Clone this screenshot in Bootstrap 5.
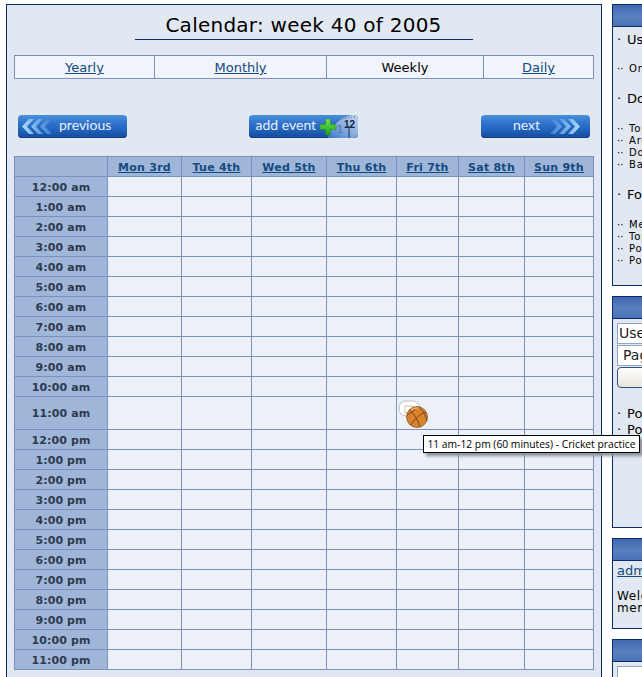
<!DOCTYPE html>
<html lang="en">
<head>
<meta charset="utf-8">
<title>Calendar</title>
<link rel="stylesheet" href="https://cdn.jsdelivr.net/npm/bootstrap@5.3.0/dist/css/bootstrap.min.css">
<style>
html,body{overflow:hidden;height:677px;background:#fff}
body{font-family:"DejaVu Sans",sans-serif;color:#000;font-size:12px;position:relative}
.shell{width:900px;padding:4px 0 0 6px;gap:10px}
.mainbox{width:596px;height:720px;flex:none;background:#e2e8f1;border:1px solid #0b2d70;padding:0 8px 0 7px}
.caltitle{width:338px;height:35px;margin:0 auto 15px;border-bottom:1px solid #0b2d70;font-size:20px;line-height:41px;text-align:center;letter-spacing:.25px;white-space:nowrap}
.gridtab{table-layout:fixed;border-collapse:collapse;width:579px}
.gridtab td,.gridtab th{border:1px solid #7b91b9;padding:0;text-align:center}
.viewtab{height:24px;margin-bottom:36px}
.viewtab td{background:#f1f4fa;font-size:13px;line-height:20px;height:23px;padding-top:2px}
.viewtab td:nth-child(1){width:140px}.viewtab td:nth-child(2){width:172px}.viewtab td:nth-child(3){width:157px}.viewtab td:nth-child(4){width:110px}
a.cal-link{color:#134a80}
.btnrow{padding:0 3px 0 4px;margin-bottom:18px;height:23px}
.imgbtn{width:109px;height:23px;padding:0;border:0;border-radius:4px;background:linear-gradient(#4a90dc 0,#3577cf 30%,#2163bd 65%,#16479a 100%);color:#e8f0fa;font-family:"Lato",sans-serif;font-size:14px;line-height:22px;display:flex;align-items:center;overflow:hidden;white-space:nowrap;box-shadow:inset 0 -1px 0 #123f8a}
.imgbtn:hover{color:#e8f0fa;background:linear-gradient(#4a90dc 0,#3577cf 30%,#2163bd 65%,#16479a 100%)}
.imgbtn span{margin-top:-3px}
.btn-prev svg{margin:0 7px 0 4px;flex:none}
.btn-next{justify-content:flex-end}
.btn-next svg{margin:0 10px 0 10px;flex:none}
.btn-add{margin-right:2px}
.btn-add span{margin-left:7px}
.btn-add svg{margin-left:auto;flex:none}
.weektab th,.weektab td{height:20px;font-size:11px;line-height:13px}
.weektab th{padding-top:2px}
.weektab thead th{background:#a0b6d9;font-weight:700;letter-spacing:.25px}
.weektab tbody th{background:#a0b6d9;color:#2d3a4e;font-weight:700;letter-spacing:.1px}
.weektab td{background:#ecf0f8}
.weektab .w1{width:93px}.weektab .w2{width:74px}.weektab .w3{width:70px}.weektab .w4{width:75px}.weektab .w5{width:70px}.weektab .w6{width:62px}.weektab .w7{width:66px}.weektab .w8{width:69px}
.weektab tr.tall th,.weektab tr.tall td{height:33px}
.weektab tr.tall th{padding-top:0}
.weektab td.evcell{text-align:left;vertical-align:top;padding:3px 0 0 1px}
.evcell svg{display:block}
.sidecol{width:280px;flex:none}
.sidebox{background:#e2e8f1;border:1px solid #0b2d70;border-right:0;margin-bottom:10px}
.sidehead{height:22px;background:linear-gradient(#3f68ae,#5a80bf 55%,#4a72b5);border-bottom:1px solid #0b2d70}
.box-one{height:282px}.box-two{height:232px}.box-three{height:91px}.box-four{height:120px}
.lv1{font-size:13px;line-height:16px;padding-left:4px;white-space:nowrap}
.lv1 b,.lv2 b{font-weight:400;display:inline-block}
.lv1 b{width:10px}
.lv2{font-size:10px;line-height:12px;padding-left:4px;letter-spacing:.8px;white-space:nowrap}
.lv2 b{width:12px;letter-spacing:0}
.sp-a{margin-top:5px}.sp-b{margin-top:15px}.sp-c{margin-top:16px}.sp-d{margin-top:18px}
.fld{height:21px;width:240px;border:1px solid #8fa5c4;background:#fff;font-size:14px;line-height:19px;padding:0 0 0 1px;margin:4px 0 0 4px;color:#222;white-space:nowrap;border-radius:0;box-shadow:none}
.fld+.fld{margin-top:1px}
.fld-sel{padding-left:5px}
.gobtn{display:block;width:240px;height:21px;margin:1px 0 0 4px;background:linear-gradient(#fff,#e8e6da);border:1px solid #33527f;border-radius:4px}
.usr{padding:3px 4px;font-size:13px;line-height:14px}
.usr a{color:#134a80}
.usr p{margin:12px 0 0;font-size:12px;letter-spacing:.6px;line-height:12px;white-space:nowrap}
.tip{position:absolute;left:423px;top:435px;background:#fff;border:1px solid #000;box-shadow:3px 3px 3px #8a8f98;font-family:"Open Sans",sans-serif;font-size:10.3px;line-height:16px;padding:0 2px;white-space:nowrap;height:18px;width:217px;text-align:center;color:#000}
</style>
</head>
<body>
<div class="d-flex shell">
  <main class="mainbox">
    <div class="caltitle">Calendar: week 40 of 2005</div>
    <table class="gridtab viewtab"><tr>
      <td><a class="cal-link" href="#">Yearly</a></td>
      <td><a class="cal-link" href="#">Monthly</a></td>
      <td>Weekly</td>
      <td><a class="cal-link" href="#">Daily</a></td>
    </tr></table>
    <div class="d-flex justify-content-between btnrow">
      <a class="btn imgbtn btn-prev" href="#"><svg width="30" height="15" viewBox="0 0 30 15"><defs><linearGradient id="ga"><stop offset="0" stop-color="#a8dcfa"/><stop offset="1" stop-color="#3a7ed2"/></linearGradient></defs><path d="M7 0h5L5 7.500l7 7.500H7L0 7.500zM16 0h5l-7 7.500 7 7.500h-5L9 7.500zM25 0h5l-7 7.500 7 7.500h-5l-7-7.500z" fill="url(#ga)"/></svg><span>previous</span></a>
      <a class="btn imgbtn btn-add" href="#"><span>add event</span><svg width="40" height="23" viewBox="0 0 40 23"><defs><linearGradient id="gc" x1="0" x2="1" y1="1" y2="0"><stop offset="0" stop-color="#3c7acc"/><stop offset=".55" stop-color="#8fb0de"/><stop offset="1" stop-color="#c6d6ee"/></linearGradient><linearGradient id="gp" x1="0" x2="0" y1="0" y2="1"><stop offset="0" stop-color="#6fe04a"/><stop offset="1" stop-color="#1da31f"/></linearGradient></defs><path d="M10 23C12 12 20 3 34 0h2a4 4 0 0 1 4 4v15a4 4 0 0 1-4 4z" fill="url(#gc)"/><path d="M16 8Q25 2 38 2" fill="none" stroke="#2d4f88" stroke-width="1" stroke-dasharray="1 2"/><path d="M31 11v12" stroke="#16325f"/><path d="M7.500 4h5v5.500H18v5h-5.500V20h-5v-5.500H2v-5h5.500z" fill="url(#gp)" stroke="#1b8c1c" stroke-width=".5"/><text x="19" y="18" font-family="Liberation Sans" font-size="11" fill="#5274ae">1</text><text x="26" y="13" font-family="Liberation Sans" font-size="11" font-weight="700" textLength="11" lengthAdjust="spacingAndGlyphs" fill="#10233f">12</text></svg></a>
      <a class="btn imgbtn btn-next" href="#"><span>next</span><svg width="30" height="15" viewBox="0 0 30 15"><defs><linearGradient id="gb"><stop offset="0" stop-color="#3a7ed2"/><stop offset="1" stop-color="#a8dcfa"/></linearGradient></defs><path d="M0 0h5l7 7.500L5 15H0l7-7.500zM9 0h5l7 7.500-7 7.500H9l7-7.500zM18 0h5l7 7.500-7 7.500h-5l7-7.500z" fill="url(#gb)"/></svg></a>
    </div>
    <table class="gridtab weektab">
      <thead><tr>
        <th class="w1"></th>
        <th class="w2"><a class="cal-link" href="#">Mon 3rd</a></th>
        <th class="w3"><a class="cal-link" href="#">Tue 4th</a></th>
        <th class="w4"><a class="cal-link" href="#">Wed 5th</a></th>
        <th class="w5"><a class="cal-link" href="#">Thu 6th</a></th>
        <th class="w6"><a class="cal-link" href="#">Fri 7th</a></th>
        <th class="w7"><a class="cal-link" href="#">Sat 8th</a></th>
        <th class="w8"><a class="cal-link" href="#">Sun 9th</a></th>
      </tr></thead>
      <tbody>
        <tr><th>12:00 am</th><td></td><td></td><td></td><td></td><td></td><td></td><td></td></tr>
        <tr><th>1:00 am</th><td></td><td></td><td></td><td></td><td></td><td></td><td></td></tr>
        <tr><th>2:00 am</th><td></td><td></td><td></td><td></td><td></td><td></td><td></td></tr>
        <tr><th>3:00 am</th><td></td><td></td><td></td><td></td><td></td><td></td><td></td></tr>
        <tr><th>4:00 am</th><td></td><td></td><td></td><td></td><td></td><td></td><td></td></tr>
        <tr><th>5:00 am</th><td></td><td></td><td></td><td></td><td></td><td></td><td></td></tr>
        <tr><th>6:00 am</th><td></td><td></td><td></td><td></td><td></td><td></td><td></td></tr>
        <tr><th>7:00 am</th><td></td><td></td><td></td><td></td><td></td><td></td><td></td></tr>
        <tr><th>8:00 am</th><td></td><td></td><td></td><td></td><td></td><td></td><td></td></tr>
        <tr><th>9:00 am</th><td></td><td></td><td></td><td></td><td></td><td></td><td></td></tr>
        <tr><th>10:00 am</th><td></td><td></td><td></td><td></td><td></td><td></td><td></td></tr>
        <tr class="tall"><th>11:00 am</th><td></td><td></td><td></td><td></td><td class="evcell"><svg width="31" height="28" viewBox="0 0 31 28"><rect x="1" y="1" width="21" height="15" rx="7" fill="#fff" stroke="#b9bdc4"/><rect x="7" y="6" width="8" height="7" fill="none" stroke="#d8bfa8"/><circle cx="19" cy="17" r="10.500" fill="#d9822f" stroke="#8a5a2a" stroke-width=".8"/><path d="M11 9.500Q19 16 22 27M13 25Q19 15 28 12M9 15Q15 13 19 6.500M20 6.500Q28 13 29 21" fill="none" stroke="#6e4218" stroke-width=".9"/><path d="M13 10Q17 7.500 21 8" fill="none" stroke="#f0b87a" stroke-width="1.200"/></svg></td><td></td><td></td></tr>
        <tr><th>12:00 pm</th><td></td><td></td><td></td><td></td><td></td><td></td><td></td></tr>
        <tr><th>1:00 pm</th><td></td><td></td><td></td><td></td><td></td><td></td><td></td></tr>
        <tr><th>2:00 pm</th><td></td><td></td><td></td><td></td><td></td><td></td><td></td></tr>
        <tr><th>3:00 pm</th><td></td><td></td><td></td><td></td><td></td><td></td><td></td></tr>
        <tr><th>4:00 pm</th><td></td><td></td><td></td><td></td><td></td><td></td><td></td></tr>
        <tr><th>5:00 pm</th><td></td><td></td><td></td><td></td><td></td><td></td><td></td></tr>
        <tr><th>6:00 pm</th><td></td><td></td><td></td><td></td><td></td><td></td><td></td></tr>
        <tr><th>7:00 pm</th><td></td><td></td><td></td><td></td><td></td><td></td><td></td></tr>
        <tr><th>8:00 pm</th><td></td><td></td><td></td><td></td><td></td><td></td><td></td></tr>
        <tr><th>9:00 pm</th><td></td><td></td><td></td><td></td><td></td><td></td><td></td></tr>
        <tr><th>10:00 pm</th><td></td><td></td><td></td><td></td><td></td><td></td><td></td></tr>
        <tr><th>11:00 pm</th><td></td><td></td><td></td><td></td><td></td><td></td><td></td></tr>
      </tbody>
    </table>
  </main>
  <aside class="sidecol">
    <section class="sidebox box-one">
      <div class="sidehead"></div>
      <div class="lv1 sp-a"><b>·</b>Users</div>
      <div class="lv2 sp-b"><b>··</b>Online</div>
      <div class="lv1 sp-c"><b>·</b>Downloads</div>
      <div class="lv2 sp-c"><b>··</b>Top</div>
      <div class="lv2"><b>··</b>Archives</div>
      <div class="lv2"><b>··</b>Downloads</div>
      <div class="lv2"><b>··</b>Back</div>
      <div class="lv1 sp-c"><b>·</b>Forum</div>
      <div class="lv2 sp-c"><b>··</b>Members</div>
      <div class="lv2"><b>··</b>Top</div>
      <div class="lv2"><b>··</b>Posts</div>
      <div class="lv2"><b>··</b>Polls</div>
    </section>
    <section class="sidebox box-two">
      <div class="sidehead"></div>
      <div class="fld">Username</div>
      <div class="fld fld-sel">Page</div>
      <button class="gobtn" type="button" aria-label="Search"></button>
      <div class="lv1 sp-d"><b>·</b>Posts</div>
      <div class="lv1"><b>·</b>Polls</div>
    </section>
    <section class="sidebox box-three">
      <div class="sidehead"></div>
      <div class="usr"><a href="#">admin</a><p>Welcome<br>member</p></div>
    </section>
    <section class="sidebox box-four">
      <div class="sidehead"></div>
      <div class="fld"></div>
    </section>
  </aside>
</div>
<div class="tip">11 am-12 pm (60 minutes) - Cricket practice</div>
<script src="https://cdn.jsdelivr.net/npm/bootstrap@5.3.0/dist/js/bootstrap.bundle.min.js"></script>
</body>
</html>
